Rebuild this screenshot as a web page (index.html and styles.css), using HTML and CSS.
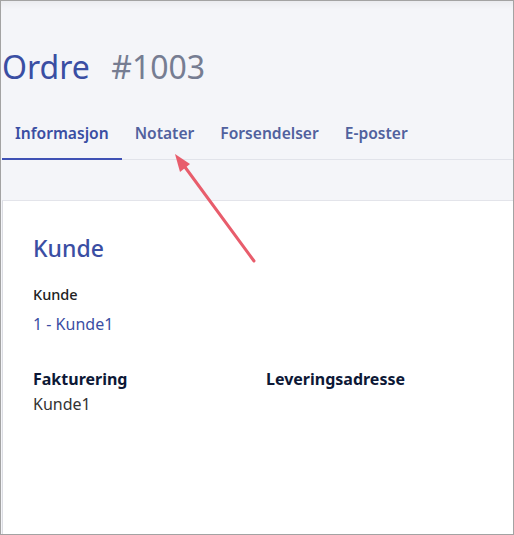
FILE: index.html
```html
<!DOCTYPE html>
<html lang="no">
<head>
    <meta charset="UTF-8">
    <meta name="viewport" content="width=device-width, initial-scale=1.0">
    <title>Ordre #1003</title>
    <link rel="stylesheet" href="styles.css">
</head>
<body>
    <div class="frame">
        <div class="header">
            <h1 class="title">Ordre <span class="number">#1003</span></h1>
            <div class="tabs">
                <a class="tab active" href="javascript:;">Informasjon</a>
                <a class="tab" href="javascript:;">Notater</a>
                <a class="tab" href="javascript:;">Forsendelser</a>
                <a class="tab" href="javascript:;">E-poster</a>
            </div>
        </div>
        <div class="card">
            <h2 class="card-title">Kunde</h2>
            <div class="label">Kunde</div>
            <a class="customer" href="javascript:;">1 - Kunde1</a>
            <div class="addresses">
                <div class="address">
                    <div class="address-title">Fakturering</div>
                    <div class="address-text">Kunde1</div>
                </div>
                <div class="address">
                    <div class="address-title">Leveringsadresse</div>
                </div>
            </div>
        </div>
        <svg class="arrow" width="514" height="535" viewBox="0 0 514 535">
            <line x1="254" y1="261" x2="182" y2="163" stroke="#e85d6c" stroke-width="3" stroke-linecap="round"/>
            <polygon points="175,154 190,164 180,172" fill="#e85d6c"/>
        </svg>
    </div>
</body>
</html>
```

FILE: styles.css
```css
*{
    margin: 0;
    padding: 0;
    box-sizing: border-box;
}
body{
    font-family: "Noto Sans", "Open Sans", sans-serif;
    background: #fff;
}
.frame{
    width: 514px;
    height: 535px;
    border: 1px solid #a3a3a3;
    background: #f4f5f9;
    box-shadow: inset 0 8px 8px -6px rgba(0,0,0,0.06);
    position: relative;
    overflow: hidden;
}
.header{
    padding: 45px 0 0 1px;
}
.title{
    font-size: 32px;
    font-weight: 400;
    line-height: 42px;
    color: #3a4ea3;
    word-spacing: 13px;
}
.number{
    color: #767d92;
}
.tabs{
    display: flex;
    margin-top: 23px;
    border-bottom: 1px solid #e1e3ea;
}
.tab{
    display: block;
    padding: 11px 13px 14px;
    font-size: 15.6px;
    font-weight: 600;
    line-height: 22px;
    color: #51619e;
    text-decoration: none;
    margin-bottom: -1px;
    border-bottom: 2px solid transparent;
}
.tab.active{
    color: #3a4ea3;
    border-bottom-color: #3f51b5;
}
.card{
    margin: 40px 0 0 1px;
    height: 400px;
    background: #fff;
    border-top: 1px solid #e3e4ea;
    border-left: 1px solid #dcdde3;
    padding: 32px 30px;
}
.card-title{
    font-size: 23px;
    font-weight: 500;
    line-height: 30px;
    color: #3a4ea3;
}
.label{
    margin-top: 21px;
    font-size: 14.5px;
    font-weight: 500;
    color: #222;
    line-height: 20px;
}
.customer{
    display: block;
    margin-top: 9px;
    font-size: 16px;
    line-height: 22px;
    color: #3a4ea3;
    text-decoration: none;
}
.addresses{
    display: grid;
    grid-template-columns: 233px 233px;
    margin-top: 33px;
}
.address-title{
    font-size: 16px;
    font-weight: 700;
    line-height: 22px;
    color: #0d1836;
}
.address-text{
    margin-top: 2px;
    font-size: 16px;
    line-height: 24px;
    color: #333;
}
.arrow{
    position: absolute;
    left: -1px;
    top: -1px;
    pointer-events: none;
}
```
